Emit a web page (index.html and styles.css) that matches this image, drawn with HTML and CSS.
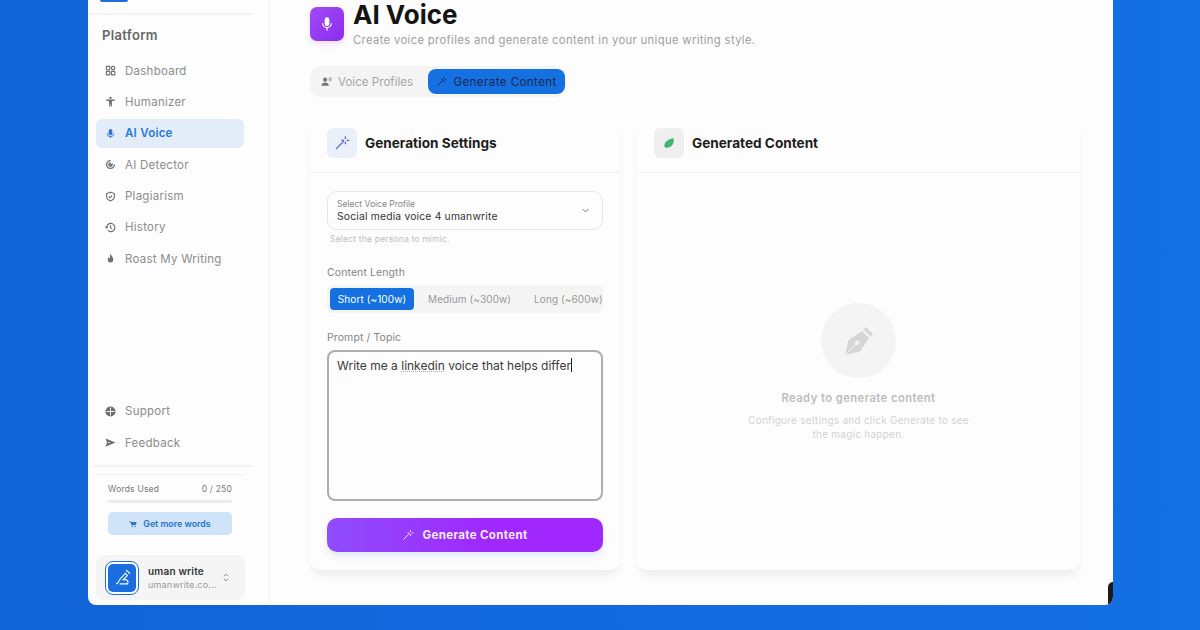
FILE: index.html
```html
<!DOCTYPE html>
<html lang="en">
<head>
    <meta charset="UTF-8">
    <meta name="viewport" content="width=device-width, initial-scale=1.0">
    <title>AI Voice</title>
    <link rel="stylesheet" href="styles.css">
</head>
<body>

    <div class="window">

        <aside class="sidebar">
            <div class="logo-edge"></div>
            <div class="side-rule"></div>
            <h4 class="side-title">Platform</h4>

            <nav class="nav">
                <a class="nav-item">
                    <svg viewBox="0 0 24 24" fill="none" stroke="currentColor" stroke-width="2.4"><rect x="3" y="3" width="7.5" height="7.5" rx="1"/><rect x="14" y="3" width="7.5" height="7.5" rx="3.7"/><rect x="3" y="14" width="7.5" height="7.5" rx="1"/><rect x="14" y="14" width="7.5" height="7.5" rx="1"/></svg>
                    Dashboard
                </a>
                <a class="nav-item">
                    <svg viewBox="0 0 24 24" fill="currentColor"><circle cx="12" cy="4" r="2.6"/><path d="M2 7.5h20v2.4l-7 1.4V23h-2.2l-.8-7-.8 7H9V11.3l-7-1.4z"/></svg>
                    Humanizer
                </a>
                <a class="nav-item active">
                    <svg viewBox="0 0 24 24" fill="currentColor"><rect x="8" y="2" width="8" height="14" rx="4"/><path d="M5 11.5v.5a7 7 0 0 0 14 0v-.5" fill="none" stroke="currentColor" stroke-width="2"/><rect x="11" y="18" width="2" height="4"/></svg>
                    AI Voice
                </a>
                <a class="nav-item">
                    <svg viewBox="0 0 24 24" fill="currentColor"><path d="M12 2a10 10 0 1 0 10 10h-3a7 7 0 1 1-7-7z"/><path d="M12 7a5 5 0 1 0 5 5c0-1.5-.5-2-1-3l-4 3 1-5z"/></svg>
                    AI Detector
                </a>
                <a class="nav-item">
                    <svg viewBox="0 0 24 24" fill="none" stroke="currentColor" stroke-width="2.4"><path d="M12 2.5l8.5 3v6c0 5-3.5 8.5-8.5 10-5-1.5-8.5-5-8.5-10v-6z"/><path d="M8.5 12l2.5 2.5 4.5-4.5"/></svg>
                    Plagiarism
                </a>
                <a class="nav-item">
                    <svg viewBox="0 0 24 24" fill="none" stroke="currentColor" stroke-width="2.4"><path d="M3.5 12a9 9 0 1 1 2.6 6.4"/><path d="M1 10l2.5 3L6.5 10.5"/><path d="M12 7v5.5l3.5 2"/></svg>
                    History
                </a>
                <a class="nav-item">
                    <svg viewBox="0 0 24 24" fill="currentColor"><path d="M12.5 1.5c.5 4 5.500 6.500 5.500 13a6 6 0 0 1-12 0c0-2.500 1-4 2.500-5.500.2 1.500.8 2.500 2 3 .5-3.500 0-7 2-10.500z"/></svg>
                    Roast My Writing
                </a>
            </nav>

            <nav class="nav nav-bottom">
                <a class="nav-item">
                    <svg viewBox="0 0 24 24" fill="currentColor"><path fill-rule="evenodd" d="M12 1a11 11 0 1 0 0 22 11 11 0 0 0 0-22zM11 3.500h2v7.500h7.500v2H13v7.500h-2V13H3.500v-2H11z"/></svg>
                    Support
                </a>
                <a class="nav-item">
                    <svg viewBox="0 0 24 24" fill="currentColor"><path d="M1 3l22 9-22 9 3.500-9zM6.500 10.800v2.400l7-1.200z"/></svg>
                    Feedback
                </a>
            </nav>

            <div class="side-rule rule-bottom"></div>
            <div class="usage-rule"></div>

            <div class="usage">
                <div class="usage-row"><span>Words Used</span><span>0 / 250</span></div>
                <div class="usage-bar"></div>
                <div class="more-btn">
                    <svg viewBox="0 0 24 24" fill="currentColor"><path d="M1 3h4l1 3h17l-3 10H7.500L4 5H1z"/><circle cx="9" cy="20" r="2"/><circle cx="18" cy="20" r="2"/></svg>
                    Get more words
                </div>
            </div>

            <div class="user-card">
                <div class="avatar">
                    <div class="avatar-inner">
                        <svg viewBox="0 0 24 24" fill="none" stroke="#fff" stroke-width="1.500"><path d="M3 21c3-1 4-3 5-6l8-9 3 3-7 7"/><path d="M8 21h11c2-3 0-6-3-6h-2"/><path d="M17 3l1-1 4 4-1 1"/></svg>
                    </div>
                </div>
                <div class="user-text">
                    <div class="user-name">uman write</div>
                    <div class="user-mail">umanwrite.co...</div>
                </div>
                <svg class="updown" viewBox="0 0 24 24" fill="none" stroke="currentColor" stroke-width="2.400"><path d="M7 9l5-5 5 5"/><path d="M7 15l5 5 5-5"/></svg>
            </div>
        </aside>

        <main class="main">
            <header class="page-head">
                <div class="head-icon">
                    <svg viewBox="0 0 24 24" fill="#fff"><rect x="8.500" y="2" width="7" height="13" rx="3.500"/><path d="M5.500 11a6.500 6.500 0 0 0 13 0" fill="none" stroke="#fff" stroke-width="1.800"/><rect x="11.100" y="17" width="1.800" height="5"/></svg>
                </div>
                <div>
                    <h1>AI Voice</h1>
                    <p class="subtitle">Create voice profiles and generate content in your unique writing style.</p>
                </div>
            </header>

            <div class="tabs">
                <div class="tab">
                    <svg viewBox="0 0 24 24" fill="currentColor"><circle cx="9" cy="8" r="4.500"/><path d="M1 21c0-5 3.500-7 8-7s8 2 8 7z"/><path d="M17 4c1.500 1 2 4 0 6M20 2c3 2 3 8 0 10" fill="none" stroke="currentColor" stroke-width="1.800"/></svg>
                    Voice Profiles
                </div>
                <div class="tab tab-on">
                    <svg viewBox="0 0 24 24" fill="none" stroke="currentColor" stroke-width="2"><path d="M3 21L15 9"/><path d="M17 2v4M17 10v4M11 8h4M19 8h4"/></svg>
                    Generate Content
                </div>
            </div>

            <div class="cards">
                <section class="card">
                    <div class="card-head">
                        <div class="card-icon icon-blue">
                            <svg viewBox="0 0 24 24" fill="none" stroke="#7a4df0" stroke-width="1.800"><path d="M3 21L15 9" stroke="#5a6fe8"/><path d="M17 2v4M17 10v4M11 8h4M19 8h4"/></svg>
                        </div>
                        <h3>Generation Settings</h3>
                    </div>

                    <div class="form">
                        <div class="select">
                            <div>
                                <div class="select-label">Select Voice Profile</div>
                                <div class="select-value">Social media voice 4 umanwrite</div>
                            </div>
                            <svg viewBox="0 0 24 24" fill="none" stroke="#666" stroke-width="2"><path d="M6 9l6 6 6-6"/></svg>
                        </div>
                        <p class="hint">Select the persona to mimic.</p>

                        <div class="field-label length-label">Content Length</div>
                        <div class="segments">
                            <span class="seg seg-on">Short (~100w)</span>
                            <span class="seg">Medium (~300w)</span>
                            <span class="seg">Long (~600w)</span>
                        </div>

                        <div class="field-label prompt-label">Prompt / Topic</div>
                        <div class="prompt">Write me a <span class="spell">linkedin</span> voice that helps differ<span class="caret"></span></div>

                        <div class="generate">
                            <svg viewBox="0 0 24 24" fill="none" stroke="#f0e4ff" stroke-width="1.800"><path d="M3 21L15 9"/><path d="M17 2v4M17 10v4M11 8h4M19 8h4"/></svg>
                            Generate Content
                        </div>
                    </div>
                </section>

                <section class="card">
                    <div class="card-head">
                        <div class="card-icon icon-gray">
                            <svg viewBox="0 0 24 24" fill="#3fb56f"><path d="M19 5c1 7-2 14-10 14-2 0-4-1-4-3C5 10 12 6 19 5z"/></svg>
                        </div>
                        <h3>Generated Content</h3>
                    </div>

                    <div class="empty">
                        <div class="empty-circle">
                            <svg viewBox="0 0 30 30"><path fill="#d6d6d6" fill-rule="evenodd" d="M1 29l3.500-15L18 5l7 7-9 13.500zM13.200 14.500a2.300 2.300 0 1 0 2.300 2.300 2.300 2.300 0 0 0-2.300-2.300z"/><path d="M2 28l10-10" stroke="#f4f4f4" stroke-width="1"/><path fill="#d6d6d6" d="M19.500 3.500L22 1l7 7-2.500 2.500z"/></svg>
                        </div>
                        <div class="empty-title">Ready to generate content</div>
                        <p class="empty-text">Configure settings and click Generate to see the magic happen.</p>
                    </div>
                </section>
            </div>
        </main>

        <div class="corner-mark"></div>
    </div>

</body>
</html>
```

FILE: styles.css
```css
* {
    box-sizing: border-box;
}
body {
    margin: 0;
    height: 630px;
    overflow: hidden;
    font-family: Inter, "Liberation Sans", sans-serif;
    background: linear-gradient(90deg, #1164d6 0%, #136adf 50%, #1570e4 100%);
}
.window {
    position: relative;
    display: flex;
    width: 1025px;
    height: 605px;
    margin-left: 88px;
    background: #fdfdfd;
    border-radius: 0 0 8px 8px;
    overflow: hidden;
}

/* sidebar */
.sidebar {
    display: flex;
    flex-direction: column;
    width: 182px;
    flex-shrink: 0;
    padding-bottom: 5px;
    border-right: 1px solid #f3f3f3;
}
.logo-edge {
    width: 28px;
    height: 2px;
    margin-left: 12px;
    background: #1a6fe0;
    border-radius: 0 0 3px 3px;
}
.side-rule {
    height: 2px;
    width: 165px;
    margin-top: 11px;
    background: #f4f4f4;
}
.side-title {
    margin: 12px 0 0 14px;
    font-size: 13px;
    line-height: 16px;
    font-weight: 600;
    letter-spacing: 0.35px;
    color: #666;
}
.nav {
    display: flex;
    flex-direction: column;
    gap: 2.4px;
    margin: 13px 25px 0 8px;
}
.nav-bottom {
    margin-top: auto;
}
.nav-item {
    display: flex;
    align-items: center;
    gap: 9px;
    height: 29px;
    padding-left: 9px;
    border-radius: 6px;
    font-size: 11.5px;
    letter-spacing: 0.25px;
    color: #8c8c8c;
}
.nav-item svg {
    width: 11px;
    height: 11px;
    color: #6e6e6e;
}
.nav-item.active {
    background: #e3edf9;
    color: #2a78de;
    font-weight: 600;
}
.nav-item.active svg {
    color: #2a78de;
}
.rule-bottom {
    margin-top: 8px;
    width: 161px;
    margin-left: 4px;
}
.usage-rule {
    height: 1px;
    margin: 7px 24px 0 8px;
    background: #f1f1f1;
}
.usage {
    margin: 0 37px 0 20px;
    padding-top: 7px;
}
.usage-row {
    display: flex;
    justify-content: space-between;
    font-size: 8.5px;
    line-height: 14px;
    letter-spacing: 0.2px;
    color: #777;
}
.usage-bar {
    height: 3px;
    margin-top: 4px;
    background: #ececec;
    border-radius: 2px;
}
.more-btn {
    display: flex;
    align-items: center;
    justify-content: center;
    gap: 6px;
    height: 23px;
    margin-top: 9px;
    background: #cfe3f9;
    border-radius: 5px;
    font-size: 8.8px;
    font-weight: 600;
    color: #2a73cf;
}
.more-btn svg {
    width: 8px;
    height: 8px;
}
.user-card {
    display: flex;
    align-items: center;
    height: 45px;
    margin: 20px 24px 0 8px;
    padding-left: 9px;
    background: #f5f5f5;
    border-radius: 8px;
}
.avatar {
    width: 34px;
    height: 34px;
    padding: 2px;
    border: 1.5px solid #1a6fe0;
    border-radius: 8px;
    background: #fff;
    flex-shrink: 0;
}
.avatar-inner {
    display: flex;
    align-items: center;
    justify-content: center;
    height: 100%;
    background: #1a6fe0;
    border-radius: 5px;
}
.avatar-inner svg {
    width: 17px;
    height: 17px;
}
.user-text {
    margin-left: 9px;
    flex: 1;
}
.user-name {
    font-size: 10px;
    line-height: 14px;
    font-weight: 600;
    letter-spacing: 0.2px;
    color: #333;
}
.user-mail {
    font-size: 9px;
    line-height: 13px;
    letter-spacing: 0.2px;
    color: #999;
}
.updown {
    width: 10px;
    height: 13px;
    margin-right: 14px;
    color: #888;
}

/* main column */
.main {
    flex: 1;
    padding: 0 33px 0 40px;
}
.page-head {
    display: flex;
    gap: 9px;
}
.head-icon {
    display: flex;
    align-items: center;
    justify-content: center;
    width: 34px;
    height: 34px;
    margin-top: 7px;
    background: linear-gradient(135deg, #a24bf5, #8a2cf0);
    border-radius: 7px;
    box-shadow: 0 3px 6px rgba(138, 44, 240, 0.15);
}
.head-icon svg {
    width: 16px;
    height: 16px;
}
h1 {
    margin: 0;
    font-size: 26px;
    line-height: 29px;
    font-weight: 700;
    color: #141414;
}
.subtitle {
    margin: 3px 0 0;
    font-size: 11.3px;
    line-height: 16px;
    letter-spacing: 0.33px;
    color: #a0a0a0;
}
.tabs {
    display: flex;
    align-items: center;
    gap: 15px;
    width: 256px;
    height: 31px;
    margin-top: 18px;
    padding: 0 1px 0 11px;
    background: #f4f4f4;
    border-radius: 11px;
}
.tab {
    display: flex;
    align-items: center;
    gap: 6px;
    height: 25px;
    font-size: 11.5px;
    letter-spacing: 0.05px;
    color: #a6a6a6;
    white-space: nowrap;
}
.tab svg {
    width: 11px;
    height: 11px;
    color: #777;
}
.tab-on {
    flex: 1;
    justify-content: center;
    background: #1570e2;
    border-radius: 8px;
    letter-spacing: 0.45px;
    color: #15294f;
}
.tab-on svg {
    color: #15294f;
}
.cards {
    display: grid;
    grid-template-columns: 310px 443px;
    gap: 17px;
    margin-top: 21px;
}
.card {
    height: 452px;
    background: #fdfdfd;
    border-radius: 10px;
    box-shadow: 0 8px 10px -3px rgba(0, 0, 0, 0.07);
}
.card-head {
    display: flex;
    align-items: center;
    gap: 8px;
    height: 55px;
    padding: 0 17px 5px;
    border-bottom: 1px solid #f0f0f0;
}
.card-head h3 {
    margin: 0;
    font-size: 13.6px;
    font-weight: 700;
    color: #1c1c1c;
}
.card-icon {
    display: flex;
    align-items: center;
    justify-content: center;
    width: 30px;
    height: 30px;
    border-radius: 6px;
}
.card-icon svg {
    width: 16px;
    height: 16px;
}
.icon-blue {
    background: #eaf0f9;
}
.icon-gray {
    background: #efefef;
}
.form {
    padding: 18px 17px 0;
}
.select {
    display: flex;
    align-items: center;
    justify-content: space-between;
    height: 39px;
    padding: 0 11px 0 9px;
    border: 1px solid #e6e6e6;
    border-radius: 10px;
}
.select svg {
    width: 11px;
    height: 11px;
}
.select-label {
    font-size: 8.5px;
    line-height: 12px;
    color: #888;
}
.select-value {
    font-size: 10.3px;
    line-height: 13px;
    letter-spacing: 0.2px;
    color: #333;
}
.hint {
    margin: 3px 0 0 3px;
    font-size: 8.6px;
    line-height: 12px;
    letter-spacing: 0.15px;
    color: #bdbdbd;
}
.field-label {
    font-size: 10.5px;
    line-height: 14px;
    letter-spacing: 0.1px;
    color: #858585;
}
.length-label {
    margin-top: 21px;
}
.segments {
    display: flex;
    align-items: center;
    height: 28px;
    margin-top: 5px;
    padding-left: 3px;
    background: #f4f4f4;
    border-radius: 6px;
}
.seg {
    font-size: 10px;
    letter-spacing: 0.1px;
    color: #999;
    white-space: nowrap;
    margin-left: 14px;
    margin-right: 9px;
}
.seg-on {
    display: flex;
    align-items: center;
    justify-content: center;
    flex-shrink: 0;
    width: 84px;
    height: 22px;
    margin: 0;
    background: #1570e2;
    border-radius: 4px;
    color: #fff;
}
.prompt-label {
    margin-top: 18px;
}
.prompt {
    height: 151px;
    margin-top: 5px;
    padding: 6px 8px;
    border: 2px solid #adadad;
    border-radius: 8px;
    font-size: 12px;
    line-height: 16px;
    color: #3a3a3a;
}
.spell {
    text-decoration: underline dotted #aaa;
}
.caret {
    display: inline-block;
    width: 1px;
    height: 14px;
    vertical-align: -2px;
    background: #222;
}
.generate {
    display: flex;
    align-items: center;
    justify-content: center;
    gap: 8px;
    height: 34px;
    margin-top: 17px;
    background: linear-gradient(90deg, #8f4dfb, #a027fd 60%);
    border-radius: 10px;
    box-shadow: 0 4px 7px rgba(60, 130, 240, 0.15);
    font-size: 11.5px;
    font-weight: 700;
    letter-spacing: 0.35px;
    color: #f4ecff;
}
.generate svg {
    width: 12px;
    height: 12px;
}
.empty {
    display: flex;
    flex-direction: column;
    align-items: center;
    padding-top: 130px;
}
.empty-circle {
    display: flex;
    align-items: center;
    justify-content: center;
    width: 75px;
    height: 75px;
    background: #f4f4f4;
    border-radius: 50%;
}
.empty-circle svg {
    width: 30px;
    height: 30px;
}
.empty-title {
    margin-top: 12px;
    font-size: 11.2px;
    line-height: 16px;
    font-weight: 600;
    letter-spacing: 0.45px;
    color: #bcbcbc;
}
.empty-text {
    width: 230px;
    margin: 7px 0 0;
    text-align: center;
    font-size: 10px;
    line-height: 14px;
    letter-spacing: 0.25px;
    color: #d3d3d3;
}
.corner-mark {
    position: absolute;
    right: 0;
    bottom: 0;
    width: 5px;
    height: 23px;
    background: #1b1b1b;
    border-radius: 5px 0 0 0;
}
```
